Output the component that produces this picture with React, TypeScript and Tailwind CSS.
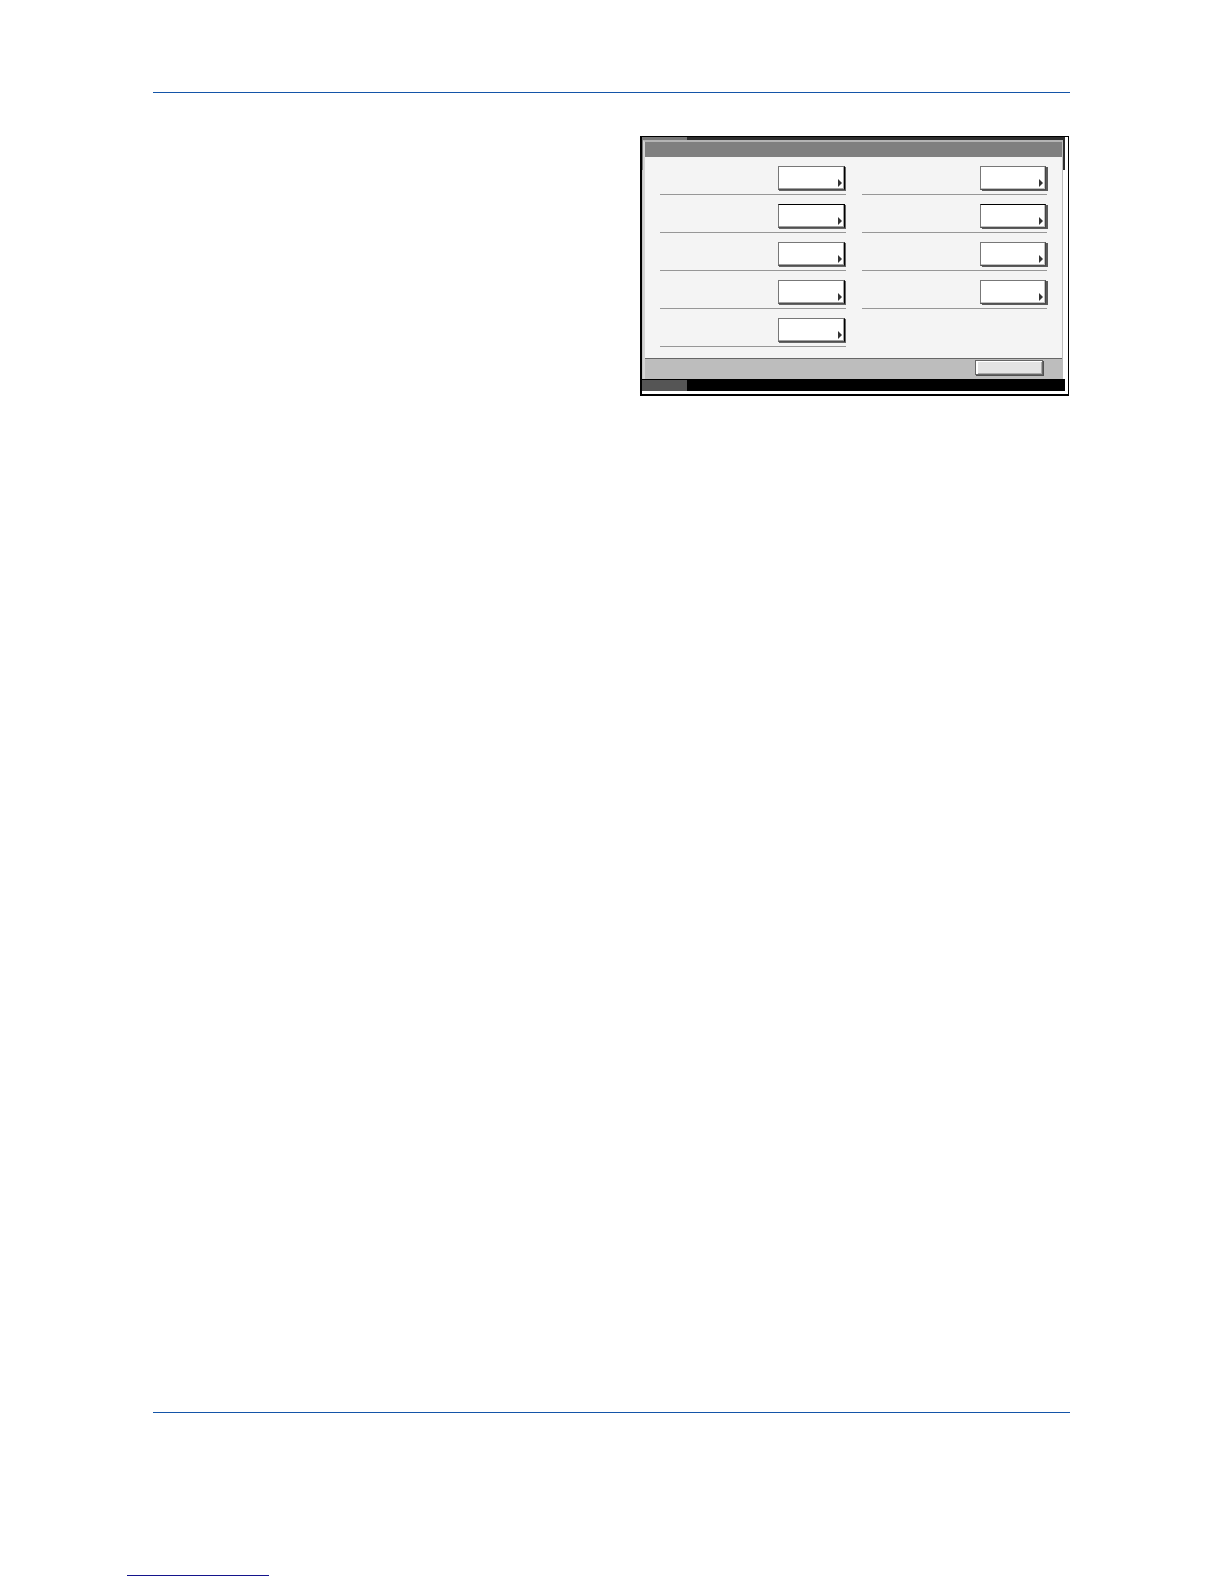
const leftItems = [
  { id: 'left-1', dark: false, label: 'Setting 1' },
  { id: 'left-2', dark: true, label: 'Setting 2' },
  { id: 'left-3', dark: false, label: 'Setting 3' },
  { id: 'left-4', dark: false, label: 'Setting 4' },
  { id: 'left-5', dark: false, label: 'Setting 5' },
];

const rightItems = [
  { id: 'right-1', dark: false, label: 'Setting 6' },
  { id: 'right-2', dark: true, label: 'Setting 7' },
  { id: 'right-3', dark: false, label: 'Setting 8' },
  { id: 'right-4', dark: false, label: 'Setting 9' },
];

const leftEdge =
  'w-[67px] border-r-black shadow-[inset_-1px_-1px_0_#a0a0a0,1px_1px_0_#666666]';
const rightEdge =
  'w-[66px] border-r-[#444444] shadow-[inset_-1px_-1px_0_#c0c0c0,2px_1px_0_#5a5a5a]';

type Item = { id: string; dark: boolean; label: string };

const SettingRow = ({ item, edge }: { item: Item; edge: string }) => (
  <li className="flex h-[38px] items-end justify-end border-b border-[#979797] pr-px pb-1">
    <button
      type="button"
      aria-label={item.label}
      className={`flex h-6 items-end justify-end border border-b-[#505050] border-l-[#777777] bg-white pr-0.5 pb-0.5 ${edge} ${
        item.dark ? 'border-t-black' : 'border-t-[#777777]'
      }`}
    >
      <svg width="4" height="8" viewBox="0 0 4 8" aria-hidden="true">
        <path d="M0 0L4 4L0 8Z" fill="#333333" />
      </svg>
    </button>
  </li>
);

const TouchPanel = () => (
  <section
    aria-label="Touch panel"
    className="mr-px ml-auto w-full max-w-[429px] border-t border-r border-b-2 border-l-2 border-black bg-white pr-[3px] pb-[3px]"
  >
    <div className="flex h-[3px]">
      <div className="w-[45px] bg-[#777777]" />
      <div className="flex-1 bg-[#2d2d2d]" />
    </div>

    <div className="flex">
      {/* left edge of the bezel */}
      <div className="flex w-px flex-col">
        <div className="h-[30px] bg-[#777777]" />
        <div className="flex-1 bg-[#c4c4c4]" />
      </div>
      <div className="flex-1 border-t-2 border-r border-l-2 border-t-[#b5b5b5] border-r-[#bdbdbd] border-l-[#d4d4d4] bg-[#f4f4f4]">
        <div className="h-[15px] bg-[#808080]" />
        <div className="grid grid-cols-2 gap-4 px-[15px] pb-[11px]">
          <ul>
            {leftItems.map(item => (
              <SettingRow key={item.id} item={item} edge={leftEdge} />
            ))}
          </ul>
          <ul>
            {rightItems.map(item => (
              <SettingRow key={item.id} item={item} edge={rightEdge} />
            ))}
          </ul>
        </div>
        <div className="flex h-[21px] justify-end border-t border-[#666666] bg-[#bdbdbd] pt-px pr-[19px]">
          <button
            type="button"
            aria-label="Close"
            className="h-[15px] w-[68px] border border-[#666666] bg-[#e4e4e4] shadow-[inset_2px_1px_0_#ffffff,inset_-1px_-1px_0_#a8a8a8,1px_1px_0_#505050]"
          />
        </div>
      </div>
      {/* right edge of the bezel */}
      <div className="w-0.5">
        <div className="h-[30px] bg-[#2d2d2d]" />
      </div>
    </div>

    <div className="flex h-3 border-t border-black bg-black">
      <div className="w-[45px] bg-[#555555]" />
    </div>
  </section>
);

const App = () => {
  return (
    <div className="flex min-h-screen flex-col bg-white font-['Liberation_Sans',sans-serif]">
      <header className="mr-[154px] ml-[153px] h-[93px] border-b border-[#1455a8]" />
      <main className="mr-[154px] ml-[153px] flex-1 pt-[43px]">
        <TouchPanel />
      </main>
      <footer className="flex h-[172px] flex-col">
        <hr className="mr-[154px] ml-[153px] border-t border-[#1455a8]" />
        <a
          href="#top"
          aria-label="Back to top"
          className="mt-auto mb-2 ml-[127px] block h-4 w-[142px] border-b border-[#14148c]"
        />
      </footer>
    </div>
  );
};

export default App;
